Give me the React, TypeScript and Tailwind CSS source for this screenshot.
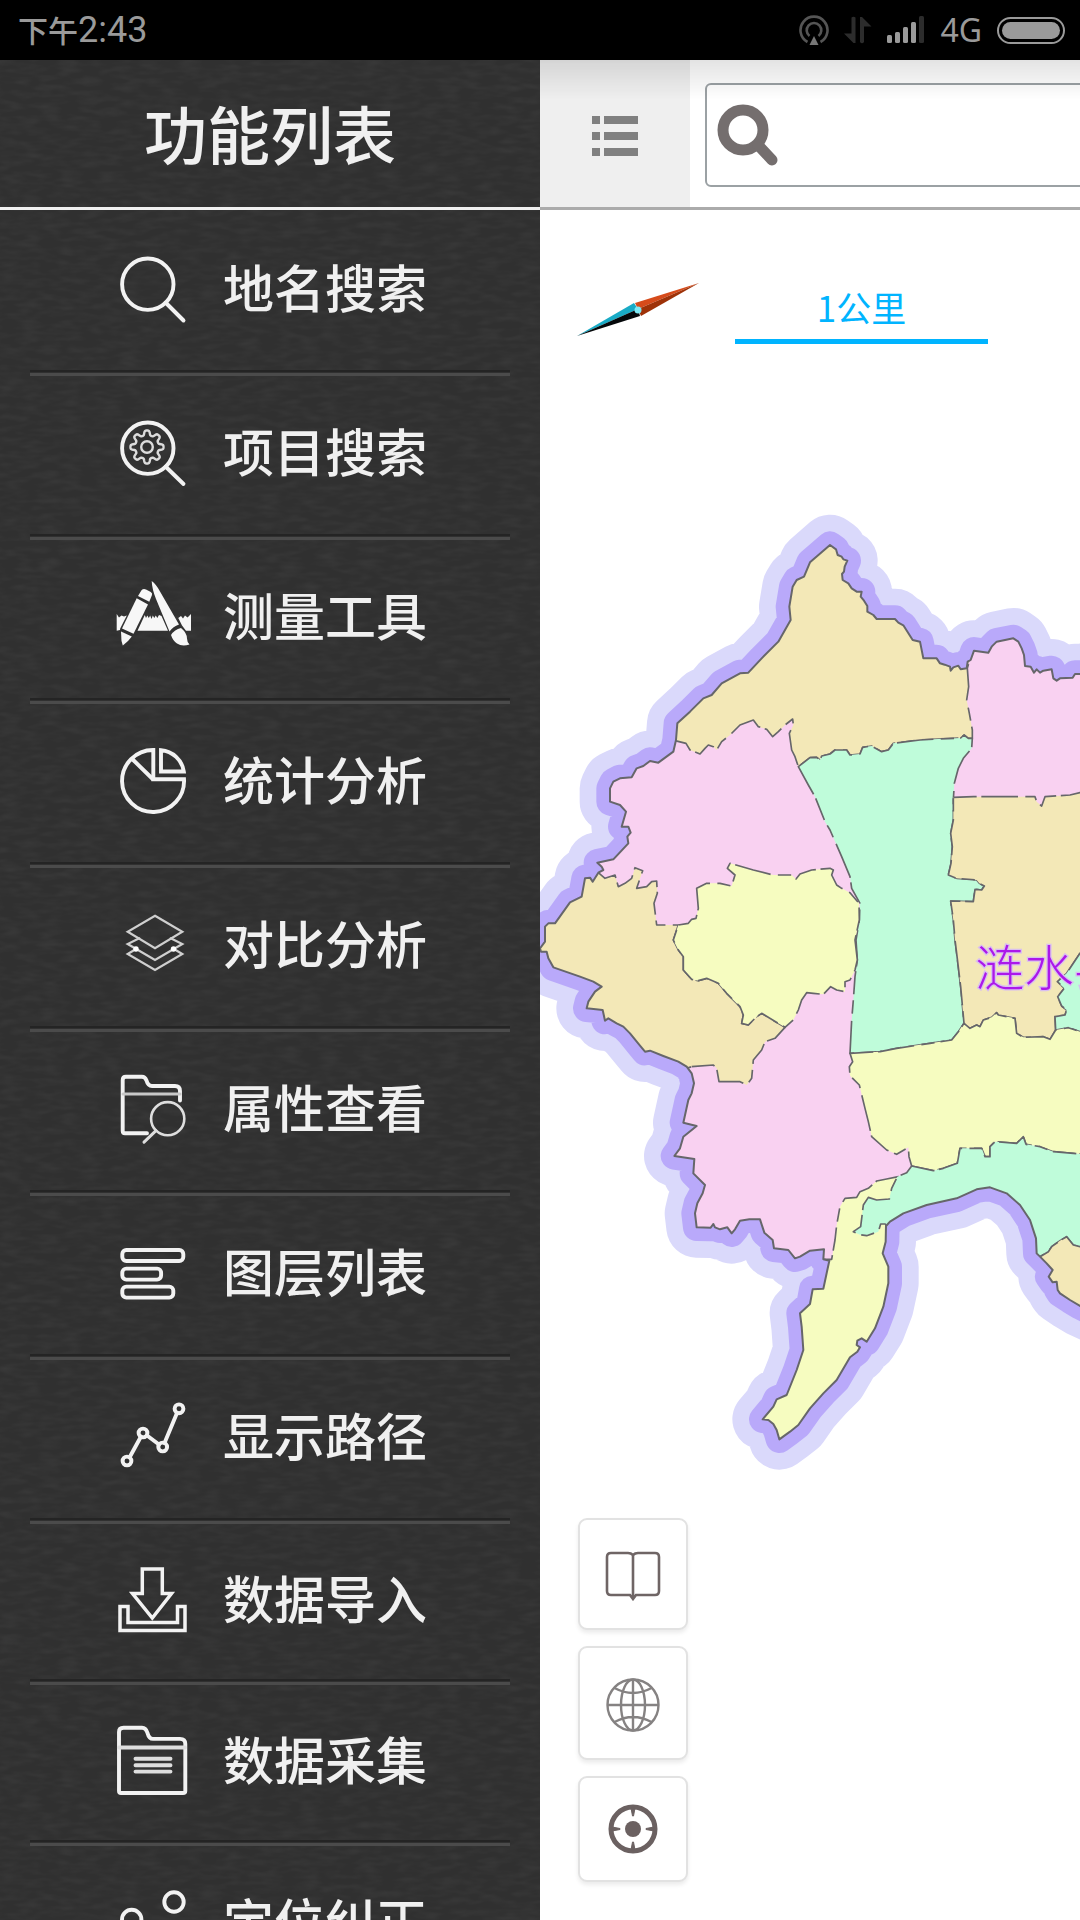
import React from "react";

const CJK = "font-['Noto_Sans_CJK_SC',sans-serif]";

const gear = (() => {
  const pts: string[] = [];
  for (let i = 0; i < 160; i++) {
    const a = (i / 160) * Math.PI * 2;
    const r = 14.2 + 2.4 * Math.tanh(2 * Math.cos(8 * a));
    pts.push(`${(31 + r * Math.sin(a)).toFixed(2)},${(30 - r * Math.cos(a)).toFixed(2)}`);
  }
  return pts.join(" ");
})();

type Item = { label: string; compact?: boolean; icon: React.ReactNode };

const items: Item[] = [
  {
    label: "地名搜索",
    icon: (
      <>
        <circle cx="31.8" cy="31.2" r="25.7" />
        <path d="M49.5 49.5 67.5 67.5" />
      </>
    ),
  },
  {
    label: "项目搜索",
    icon: (
      <>
        <circle cx="31.8" cy="31.2" r="25.7" />
        <path d="M49.5 49.5 67.5 67" />
        <polygon points={gear} strokeWidth="2.4" stroke="#dcdcdc" />
        <circle cx="31" cy="30" r="5.8" strokeWidth="2.4" stroke="#dcdcdc" />
      </>
    ),
  },
  {
    label: "测量工具",
    icon: (
      <g fill="#f7f7f7" stroke="none">
        <path d="M20.7 17.3 32 23.5 17.5 52.8 6 47.5Z" />
        <path d="M22 15 25.5 9.3Q27.5 7.3 30 8.6L34.8 11Q36.8 12.3 35.9 14.3L33.3 20.7Z" />
        <path d="M5 50.5 15.8 55.5 12 60 6.8 64.5 5.5 60Z" />
        <path d="M35.7 0Q40 3 44 10.5L63 43.5Q57 45.5 53.5 50.5L40 18Q36 8 35.7 0Z" />
        <path d="M55 54Q58.5 48.5 65 47Q71 52 71 57.5Q71 61 73.5 63.5Q66 66 61 62.5Q57 60 55 54Z" />
        <path d="M28.8 34 30 37 31.3 34.5 32.8 37 34.2 34.5 35.5 38 36.8 34.5 38.3 37 39.8 34.5 41.3 37 43 34 45.5 35 52 49.7H21.5Z" />
        <path d="M.7 33 3 36.5 5.5 34.5 8 35.5 10.8 34.5 4.2 47.5 4 49 .7 49.7Z" />
        <path d="M62.3 37 65 35 67 37.5 69 34.5 71.5 36.5 75 33V49.7H70L66 44.5Z" />
      </g>
    ),
  },
  {
    label: "统计分析",
    icon: (
      <>
        <path d="M37.3 5V34.3H68A31 31 0 1 1 37.3 5Z" />
        <path d="M16.7 14.5 36.7 34" />
        <path d="M45 5.2V26.5H67.8A25 25 0 0 0 45 5.2Z" />
      </>
    ),
  },
  {
    label: "对比分析",
    icon: (
      <g stroke="#cfcfcf" strokeWidth="2.2">
        <path d="M39 6.7 66.3 22.7 39 39.3 11.7 22.7Z" />
        <path d="M23.3 29.3 11.7 35 39 51 66.3 35 54.7 29.3" />
        <path d="M20 40 11.7 45 39 61 66.3 45 58 40" />
        <circle cx="20" cy="40" r="1.6" fill="#fff" stroke="#fff" />
        <circle cx="57.5" cy="40" r="1.6" fill="#fff" stroke="#fff" />
      </g>
    ),
  },
  {
    label: "属性查看",
    icon: (
      <>
        <path d="M31 60.3H9Q6.7 60.3 6.7 58V7Q6.7 3.8 10 3.8H26Q29 3.8 30.5 7.5Q32 13 36 13H59Q64 13 64 18V27.5" />
        <path d="M7 21H64" stroke="#c8c8c8" strokeWidth="3" />
        <circle cx="51.7" cy="45.7" r="16.6" stroke="#dedede" strokeWidth="2.6" />
        <path d="M40 57.7 28 69.2" stroke="#dedede" strokeWidth="3" />
      </>
    ),
  },
  {
    label: "图层列表",
    icon: (
      <>
        <rect x="6.3" y="13" width="61" height="11" rx="4" />
        <rect x="6.3" y="31.6" width="38.8" height="11" rx="4" />
        <rect x="6.3" y="49.6" width="51" height="11" rx="4" />
      </>
    ),
  },
  {
    label: "显示路径",
    icon: (
      <>
        <path d="M13.5 56.5 25 35.5M31 34.5 43 43.5M48.5 42 61 12" />
        <circle cx="11" cy="60" r="4.4" />
        <circle cx="27" cy="32" r="4.4" />
        <circle cx="46.7" cy="46" r="4.4" />
        <circle cx="63" cy="7.8" r="4.4" />
      </>
    ),
  },
  {
    label: "数据导入",
    compact: true,
    icon: (
      <g strokeWidth="3.5" strokeLinecap="butt">
        <path d="M26.3 5.1H46.3V29.6H55.5L36.3 54 16.5 29.6H26.3Z" />
        <path d="M4 42.5H12V58.5H61.5V42.5H69V66.5H4Z" />
      </g>
    ),
  },
  {
    label: "数据采集",
    compact: true,
    icon: (
      <>
        <path d="M3 66V7Q3 2.8 7.5 2.8H26Q30 2.8 31.5 8Q33 13.9 37 13.9H64Q69.3 13.9 69.3 19V66Q69.3 68 67 68H5Q3 68 3 66Z" />
        <path d="M3 22.5H69" stroke="#dedede" />
        <path d="M19.5 33.8H54.5M19.5 40.2H54.5M19.5 46.6H54.5" stroke="#dedede" />
      </>
    ),
  },
  {
    label: "定位纠正",
    icon: (
      <>
        <circle cx="58" cy="15" r="9.7" />
        <circle cx="15.7" cy="32.5" r="9.7" />
      </>
    ),
  },
];

/* County map, drawn in thirds of a pixel. */
const outline =
  "M870,135 888,148 893,165 905,170 910,178 922,182 914,200 912,215 906,222 908,240 925,250 935,265 950,275 965,275 962,290 972,302 982,318 982,335 1000,345 1010,357 1065,357 1075,368 1090,376 1118,420 1140,425 1150,475 1190,475 1200,490 1214,494 1230,500 1232,512 1240,502 1255,497 1262,508 1280,505 1283,485 1292,480 1302,452 1345,458 1355,440 1370,425 1420,415 1435,425 1445,445 1452,465 1455,498 1472,500 1482,518 1490,508 1500,518 1510,512 1535,508 1540,535 1550,542 1560,535 1598,533 1605,522 1625,522 1750,500 1750,2480 1620,2418 1590,2400 1560,2380 1553,2370 1550,2345 1538,2347 1526,2330 1538,2310 1520,2290 1500,2270 1490,2260 1488,2215 1470,2160 1440,2115 1400,2080 1350,2062 1310,2068 1250,2095 1160,2115 1090,2140 1050,2165 1038,2178 1037,2225 1028,2260 1045,2300 1045,2350 1030,2420 1005,2485 980,2525 965,2515 952,2522 950,2535 960,2542 952,2555 930,2572 890,2640 850,2680 810,2725 775,2775 750,2795 718,2818 710,2790 700,2772 685,2760 668,2758 700,2720 710,2698 740,2685 770,2610 790,2550 785,2480 780,2440 810,2412 818,2368 850,2366 868,2282 850,2278 852,2248 810,2252 780,2270 765,2275 745,2250 702,2245 698,2220 673,2198 660,2158 628,2158 600,2162 585,2188 575,2200 562,2182 540,2188 525,2182 520,2172 512,2183 470,2182 465,2140 472,2110 488,2080 495,2055 460,2020 463,1977 403,1968 420,1945 430,1910 470,1878 430,1868 445,1800 455,1780 462,1750 455,1720 440,1700 415,1685 370,1668 330,1652 315,1655 300,1637 270,1600 250,1580 230,1570 205,1555 195,1562 188,1530 140,1525 145,1505 165,1475 185,1460 160,1445 120,1430 40,1402 25,1375 20,1355 3,1355 0,1345 15,1325 15,1280 25,1270 45,1270 90,1207 125,1190 135,1135 150,1133 158,1145 175,1118 190,1110 185,1100 172,1088 220,1078 265,1030 262,1010 272,998 265,980 245,980 258,935 240,915 210,905 210,865 220,845 240,835 275,832 290,805 310,798 330,783 355,788 400,755 408,720 412,670 450,635 490,595 515,585 545,550 600,520 625,518 665,475 715,425 752,360 748,320 758,260 770,240 792,230 810,187Z";

const regions: { fill: string; d: string }[] = [
  {
    fill: "#f3e8b7",
    d: "M380,700 500,400 860,60 1300,440 1282,505 1286,560 1280,600 1288,640 1297,690 1297,715 1285,715 1272,705 1262,714 1195,717 1140,720 1060,730 1045,750 1025,755 995,738 968,742 960,762 930,765 920,750 885,750 870,762 845,768 840,780 830,772 810,773 775,800 765,770 755,750 748,700 760,675 758,657 735,675 715,695 698,710 680,688 655,680 640,660 600,675 570,705 545,725 530,750 520,740 505,735 495,745 480,762 450,750 438,730 405,722Z",
  },
  {
    fill: "#bffcda",
    d: "M775,800 810,773 830,772 840,780 845,768 870,762 885,750 920,750 930,765 960,762 968,742 995,738 1025,755 1045,750 1060,730 1140,720 1195,717 1262,714 1272,705 1285,715 1297,715 1295,745 1270,775 1255,805 1243,850 1240,900 1240,960 1232,1000 1237,1040 1233,1090 1225,1125 1250,1135 1310,1140 1318,1150 1333,1158 1325,1170 1305,1168 1300,1205 1232,1203 1240,1260 1245,1320 1250,1360 1262,1460 1272,1570 1255,1595 1235,1620 1170,1630 1070,1645 1020,1655 930,1660 935,1560 940,1500 945,1430 952,1380 948,1320 958,1260 960,1210 935,1165 930,1130 905,1070 870,990 855,965 825,890 805,855Z",
  },
  {
    fill: "#f3e8b7",
    d: "M1240,892 1300,890 1405,890 1485,890 1490,905 1505,918 1515,890 1590,885 1620,878 1750,870 1750,1380 1620,1360 1580,1420 1552,1445 1573,1465 1553,1490 1565,1518 1580,1530 1575,1545 1545,1550 1547,1590 1530,1618 1510,1610 1480,1612 1450,1612 1430,1600 1425,1555 1375,1545 1370,1538 1355,1552 1330,1560 1320,1580 1310,1575 1290,1585 1272,1570 1262,1460 1250,1360 1245,1320 1240,1260 1232,1203 1300,1205 1305,1168 1325,1170 1333,1158 1318,1150 1310,1140 1250,1135 1225,1125 1233,1090 1237,1040 1232,1000 1240,960Z",
  },
  {
    fill: "#bffcda",
    d: "M1750,1330 1620,1360 1580,1420 1552,1445 1573,1465 1553,1490 1565,1518 1580,1530 1575,1545 1545,1550 1547,1590 1585,1583 1620,1595 1750,1600Z",
  },
  {
    fill: "#f6fcc0",
    d: "M930,1660 1020,1655 1070,1645 1170,1630 1235,1620 1255,1595 1272,1570 1290,1585 1310,1575 1320,1580 1330,1560 1355,1552 1370,1538 1375,1545 1425,1555 1430,1600 1450,1612 1510,1610 1530,1618 1547,1590 1585,1583 1620,1595 1750,1620 1750,1980 1620,1962 1540,1955 1500,1940 1458,1933 1450,1910 1430,1930 1365,1925 1350,1940 1350,1970 1335,1970 1325,1945 1260,1945 1252,1990 1210,2005 1180,2012 1115,1998 1107,1970 1105,1942 1070,1963 1040,1950 995,1910 985,1865 975,1825 958,1755 930,1727 928,1700 938,1685Z",
  },
  {
    fill: "#f6fcc0",
    d: "M1075,2030 1040,2037 1010,2043 985,2065 960,2075 950,2092 915,2095 900,2120 890,2175 885,2220 875,2278 850,2278 700,2500 620,2800 720,2900 900,2800 1100,2500 1060,2150Z",
  },
  {
    fill: "#bffcda",
    d: "M1115,1998 1180,2012 1210,2005 1252,1990 1260,1945 1325,1945 1335,1970 1350,1970 1350,1940 1365,1925 1430,1930 1450,1910 1458,1933 1500,1940 1540,1955 1620,1962 1750,1980 1750,2260 1620,2240 1600,2235 1580,2210 1560,2222 1535,2240 1525,2255 1500,2270 1400,2250 1150,2200 1045,2190 1036,2172 1022,2172 1015,2195 980,2207 960,2204 940,2195 962,2180 970,2115 985,2092 1010,2100 1048,2097 1055,2065 1072,2030 1100,2018Z",
  },
  {
    fill: "#f3e8b7",
    d: "M1500,2270 1525,2255 1535,2240 1560,2222 1580,2210 1600,2235 1620,2240 1750,2260 1750,2500 1480,2400Z",
  },
  {
    fill: "#f3e8b7",
    d: "M455,1700 520,1695 530,1705 537,1745 600,1745 620,1755 635,1735 640,1680 665,1650 675,1625 705,1615 735,1582 665,1540 650,1550 625,1575 605,1570 610,1545 600,1520 560,1480 535,1450 500,1435 475,1442 455,1438 430,1410 430,1370 415,1350 400,1320 415,1275 350,1275 342,1210 352,1180 350,1143 335,1145 320,1160 290,1165 308,1112 285,1103 275,1135 255,1150 235,1160 225,1125 195,1135 175,1118 80,1080 -100,1300 100,1700 300,1750Z",
  },
  {
    fill: "#f6fcc0",
    d: "M415,1275 445,1270 455,1258 468,1255 475,1225 470,1165 500,1150 540,1150 575,1158 585,1125 562,1105 570,1090 640,1110 700,1125 755,1125 768,1137 780,1122 815,1110 870,1105 880,1110 875,1125 890,1155 905,1165 930,1178 957,1210 958,1260 945,1320 952,1380 945,1410 930,1440 915,1445 915,1475 890,1470 872,1460 850,1483 820,1480 800,1478 785,1500 775,1530 760,1560 735,1582 665,1540 650,1550 625,1575 605,1570 610,1545 600,1520 560,1480 535,1450 500,1435 475,1442 455,1438 430,1410 430,1370 415,1350 400,1320Z",
  },
];

function CountyMap() {
  return (
    <svg
      className="absolute inset-0 h-full w-full"
      viewBox="0 -870 1620 5130"
      preserveAspectRatio="xMinYMin slice"
      role="img"
      aria-label="涟水县地图"
    >
      <clipPath id="county">
        <path d={outline} />
      </clipPath>
      <g strokeLinejoin="round" fill="none">
        <path d={outline} stroke="#dad9fb" strokeWidth="182" />
        <path d={outline} stroke="#b9a9fa" strokeWidth="82" />
      </g>
      <g clipPath="url(#county)">
        <path d={outline} fill="#f9d1f1" />
        {regions.map((r, i) => (
          <path
            key={i}
            d={r.d}
            fill={r.fill}
            stroke="#66666a"
            strokeWidth="5"
            strokeDasharray="70 14 110 22 40 18"
            strokeLinejoin="round"
          />
        ))}
      </g>
      <path d={outline} fill="none" stroke="#66666a" strokeWidth="6" strokeLinejoin="round" />
      <text
        x="1305"
        y="1458"
        fontSize="148"
        className="font-['Noto_Sans_CJK_SC',sans-serif] font-light"
        fill="#ac18ea"
        stroke="#d9bff0"
        strokeWidth="8"
        paintOrder="stroke"
      >
        涟水县
      </text>
    </svg>
  );
}

function StatusBar() {
  return (
    <div className="flex h-[60px] shrink-0 items-center justify-between bg-black pl-[18px] pr-[15px] text-[#9a9a9a]">
      <div className="flex items-baseline leading-none">
        <span className={`text-[30px] font-medium ${CJK}`}>下午</span>
        <span className="font-[Roboto,sans-serif] text-[36px]">2:43</span>
      </div>
      <div className="flex items-center gap-[15px]">
        <svg width="30" height="30" viewBox="0 0 30 30" fill="none" stroke="#555" strokeWidth="2.6">
          <path d="M8.5 27A13.5 13.5 0 1 1 21.5 27" />
          <path d="M10.5 21A7.3 7.3 0 1 1 19.5 21" />
          <path d="M15 21 19.5 30H10.5Z" fill="#777" stroke="none" />
        </svg>
        <svg width="28" height="28" viewBox="0 0 28 28" fill="#2c2c2c">
          <path d="M7.5 1.5Q9.5 0 11.5 1.5V27H9.5L0 17.5H7.5Z" />
          <path d="M16 1H18L27.5 10.5H20V26Q18 28.5 16 26Z" />
        </svg>
        <svg width="38" height="28" viewBox="0 0 38 28" fill="#9a9a9a">
          <rect x="0" y="19" width="5" height="8" rx="1.5" />
          <rect x="8" y="16" width="5" height="11" rx="1.5" />
          <rect x="16" y="11" width="5" height="16" rx="1.5" />
          <rect x="24" y="6" width="5" height="21" rx="1.5" />
          <rect x="32" y="0" width="5" height="27" rx="1.5" fill="#2c2c2c" />
        </svg>
        <span className="font-['Noto_Sans',sans-serif] text-[32px] leading-none">4G</span>
        <div className="h-[27px] w-[68px] rounded-full border-2 border-[#9a9a9a] p-[3px]">
          <div className="h-full rounded-full bg-[#9a9a9a]" />
        </div>
      </div>
    </div>
  );
}

function Sidebar() {
  return (
    <aside className="relative w-1/2 overflow-hidden bg-[#333333] text-[#f0f0f0]">
      <svg className="pointer-events-none absolute inset-0 h-full w-full opacity-5" aria-hidden="true">
        <filter id="leather" colorInterpolationFilters="sRGB" x="0" y="0" width="100%" height="100%">
          <feTurbulence type="fractalNoise" baseFrequency="0.05 0.16" numOctaves="2" seed="4" />
          <feColorMatrix values="1.2 0 0 0 -0.45  1.2 0 0 0 -0.45  1.2 0 0 0 -0.45  0 0 0 0 1" />
        </filter>
        <rect width="100%" height="100%" filter="url(#leather)" />
      </svg>
      <h1
        className={`relative flex h-[150px] items-center justify-center border-b-[3px] border-[#f0f0f0] pb-1 text-[63px] font-medium leading-none ${CJK}`}
      >
        功能列表
      </h1>
      <nav className="relative pt-[2px]">
        <ul>
          {items.map((item) => (
            <li key={item.label} className={`flex flex-col ${item.compact ? "h-[161px]" : "h-[164px]"}`}>
              <button type="button" className="flex w-full flex-1 items-center gap-[35px] pb-1 pl-[116px]">
                <svg
                  width="72"
                  height="72"
                  viewBox="0 0 72 72"
                  className="shrink-0 overflow-visible"
                  fill="none"
                  stroke="#f2f2f2"
                  strokeWidth="3.9"
                  strokeLinecap="round"
                  aria-hidden="true"
                >
                  {item.icon}
                </svg>
                <span className={`whitespace-nowrap pb-[5px] text-[51px] font-medium leading-none ${CJK}`}>
                  {item.label}
                </span>
              </button>
              <div className="mx-[30px] h-[6px] border-b-[3px] border-t-2 border-b-[#4b4b4b] border-t-[#242424] bg-[#303030]" />
            </li>
          ))}
        </ul>
      </nav>
    </aside>
  );
}

const toolButton =
  "flex w-[110px] items-center justify-center rounded-[9px] border-2 border-[#e2e2e2] bg-white shadow-[0_3px_4px_rgba(0,0,0,0.08)]";

export default function App() {
  return (
    <div className="flex h-screen flex-col overflow-hidden bg-white">
      <StatusBar />
      <div className="flex min-h-0 flex-1">
        <Sidebar />
        <main className="relative flex w-1/2 flex-col overflow-hidden bg-white">
          <div className="flex h-[150px] shrink-0 border-b-[3px] border-[#ababab]">
            <button
              type="button"
              aria-label="菜单"
              className="flex w-[150px] shrink-0 items-center justify-center bg-[#efefef] pt-1"
            >
              <svg width="46" height="42" viewBox="0 0 46 42" fill="#808080">
                <path d="M0 1H8V9H0ZM12 1H46V9H12ZM0 17H8V25H0ZM12 17H46V25H12ZM0 33H8V41H0ZM12 33H46V41H12Z" />
              </svg>
            </button>
            <label className="mb-[20px] ml-[15px] mt-[23px] -mr-[40px] flex flex-1 items-center rounded-[6px] border-2 border-[#9ba1a4] bg-white pl-[10px]">
              <svg width="62" height="62" viewBox="0 0 62 62" fill="none" stroke="#746e6e" className="shrink-0">
                <circle cx="26" cy="26" r="20" strokeWidth="11" />
                <path d="M41 41 55 56" strokeWidth="11" strokeLinecap="round" />
              </svg>
              <input type="search" aria-label="搜索" className="h-full min-w-0 flex-1 bg-transparent px-3 text-4xl outline-none" />
            </label>
          </div>
          <div className="pointer-events-none absolute inset-x-0 top-0 h-[40px] border-t-[3px] border-black/10 bg-linear-to-b from-black/10 to-transparent" />
          <section className="relative min-h-0 flex-1">
            <CountyMap />
            <div className="relative flex items-start gap-[36px] pl-[37px] pt-[73px]">
              <svg width="122" height="54" viewBox="0 0 122 54" className="shrink-0" aria-label="指北针">
                <path d="M122 0 58 20 61 26Z" fill="#d64b1b" />
                <path d="M122 0 61 26 64 33Z" fill="#9e3208" />
                <path d="M0 53 57 20 61 26Z" fill="#19abc6" />
                <path d="M0 53 61 26 63 33Z" fill="#05080a" />
                <circle cx="61" cy="27" r="3.5" fill="#7feaf5" />
              </svg>
              <div
                className={`w-[253px] border-b-[5px] border-[#00b4ff] pb-[8px] text-center text-[35px] leading-[48px] text-[#00b4ff] ${CJK}`}
              >
                1公里
              </div>
            </div>
            <div className="absolute bottom-[38px] left-[38px] flex flex-col gap-[16px]">
              <button type="button" aria-label="图例" className={`${toolButton} h-[112px] pt-1`}>
                <svg width="56" height="50" viewBox="0 0 56 50" fill="none" stroke="#6f6565" strokeWidth="2.6">
                  <path d="M28 4Q26 2 23 2H6Q2 2 2 6V40Q2 44 6 44H25L28 48 31 44H50Q54 44 54 40V6Q54 2 50 2H33Q30 2 28 4V47" />
                </svg>
              </button>
              <button type="button" aria-label="全图" className={`${toolButton} h-[114px] pt-1`}>
                <svg width="54" height="54" viewBox="0 0 54 54" fill="none" stroke="#858282" strokeWidth="2.4">
                  <circle cx="27" cy="27" r="25.5" />
                  <ellipse cx="27" cy="27" rx="12" ry="25.5" />
                  <path d="M1.500 27H52.500M27 1.500V52.500M8.500 10Q27 20 45.500 10M8.500 44Q27 34 45.500 44" />
                </svg>
              </button>
              <button type="button" aria-label="定位" className={`${toolButton} h-[106px]`}>
                <svg width="50" height="50" viewBox="0 0 50 50" fill="none" stroke="#6b6161" strokeWidth="5">
                  <circle cx="25" cy="25" r="22" />
                  <circle cx="25" cy="25" r="8" fill="#6b6161" stroke="none" />
                  <path d="M23 4H27L25.500 12H24.500ZM23 46H27L25.500 38H24.500ZM4 23V27L12 25.500V24.500ZM46 23V27L38 25.500V24.500Z" fill="#6b6161" strokeWidth="1" />
                </svg>
              </button>
            </div>
          </section>
        </main>
      </div>
    </div>
  );
}
